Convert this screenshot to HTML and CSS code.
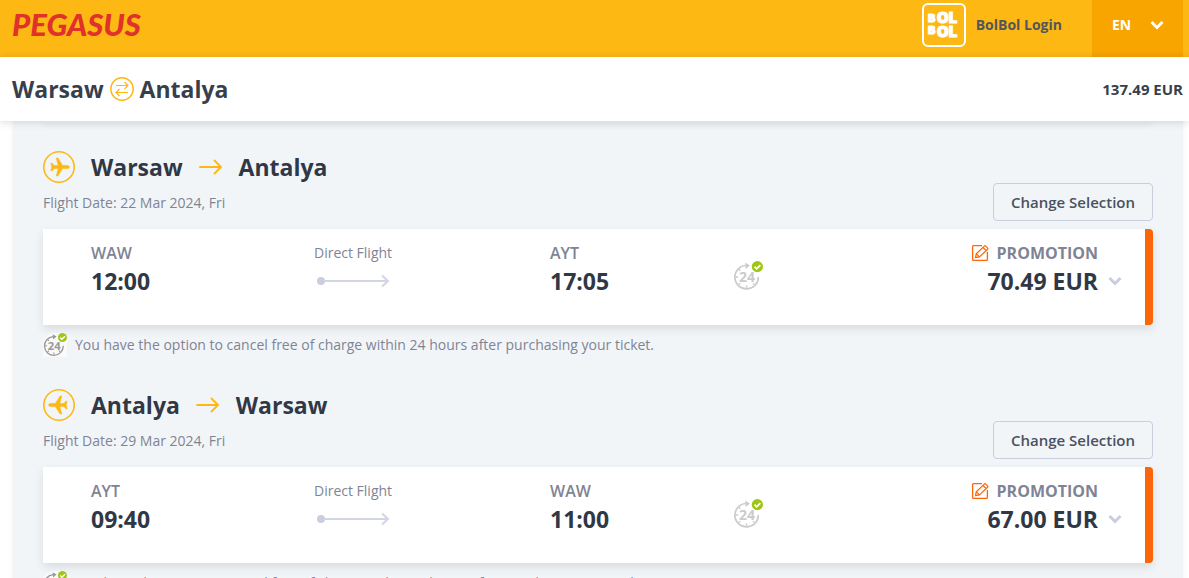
FILE: index.html
```html
<!DOCTYPE html>
<html lang="en">
<head>
  <meta charset="UTF-8">
  <meta name="viewport" content="width=device-width, initial-scale=1">
  <title>Pegasus</title>
  <link rel="stylesheet" href="styles.css">
</head>
<body>
  <!-- shared icons -->
  <svg class="sprite" aria-hidden="true">
    <symbol id="plane" viewBox="0 0 32 32">
      <circle cx="16" cy="16" r="15.200" fill="none" stroke="currentColor" stroke-width="1.600"/>
      <path fill="currentColor" d="M26.500 16c0 .9-1.200 1.600-2.500 1.600h-4.400L15 25h-1.800l2-7.400H11l-1.600 2.200H7.800l1-3.800-1-3.800h1.600L11 14.400h4.200L13.200 7H15l4.600 7.400H24c1.300 0 2.500.7 2.500 1.600z" stroke="currentColor" stroke-width=".5" stroke-linejoin="round"/>
    </symbol>
    <symbol id="arrow" viewBox="0 0 24 16">
      <path d="M1 8h21M15.500 1.500L22 8l-6.500 6.500" fill="none" stroke="currentColor" stroke-width="1.800" stroke-linecap="round" stroke-linejoin="round"/>
    </symbol>
    <symbol id="route" viewBox="0 0 74 14">
      <circle cx="5" cy="7" r="4" fill="#c9cddd"/>
      <path d="M8 7h63M66 1.500l6 5.500-6 5.500" fill="none" stroke="#d2d5e2" stroke-width="2"/>
    </symbol>
    <symbol id="chevron" viewBox="0 0 14 10">
      <path d="M1.500 2L7 7.500 12.500 2" fill="none" stroke="currentColor" stroke-width="3"/>
    </symbol>
    <symbol id="edit" viewBox="0 0 18 18">
      <path d="M11 1.600H2.500a.9.900 0 0 0-.9.900v13a.9.900 0 0 0 .9.900h13a.9.900 0 0 0 .9-.9V8" fill="none" stroke="currentColor" stroke-width="1.300"/>
      <path d="M4.500 13.700l.8-4 8-7.600a1 1 0 0 1 1.400 0l1.800 1.800a1 1 0 0 1 0 1.400l-8 7.600zM5.300 9.700l3.200 3.200M12 3.500l3 3" fill="none" stroke="currentColor" stroke-width="1.200" stroke-linejoin="round"/>
    </symbol>
    <symbol id="free-cancel" viewBox="0 0 32 32">
      <path d="M13.500 4.800A12.500 12.500 0 1 0 27 17" fill="none" stroke="currentColor" stroke-width="1.800"/>
      <path d="M13 1.500l5 3.200-4.500 3.800z" fill="currentColor"/>
      <path d="M3 17h2.500M14.500 28.500V26M6.200 25.200l1.600-1.600M22.800 25.200l-1.600-1.600M6.200 8.800l1.600 1.600" stroke="currentColor" stroke-width="1.500"/>
      <text x="15" y="22" text-anchor="middle" class="icon-24">24</text>
      <circle cx="26" cy="6" r="6" fill="#a1c517"/>
      <path d="M23 6l2.200 2.300 4-4" fill="none" stroke="#fff" stroke-width="1.800"/>
    </symbol>
  </svg>

  <header class="topbar">
    <a class="logo" href="#">PEGASUS</a>
    <div class="topbar-right">
      <a class="login" href="#">
        <svg class="bolbol" viewBox="0 0 44 44" aria-hidden="true">
          <rect x="1" y="1" width="42" height="42" rx="5" fill="none" stroke="#fff" stroke-width="2"/>
          <text x="6" y="19" class="bol-small">B</text>
          <text x="15" y="20" class="bol">OL</text>
          <text x="6" y="31" class="bol-small">B</text>
          <text x="15" y="34" class="bol">OL</text>
        </svg>
        BolBol Login
      </a>
      <button class="language" type="button">EN <svg class="chevron"><use href="#chevron"/></svg></button>
    </div>
  </header>

  <div class="summary">
    <div class="summary-route">
      <span>Warsaw</span>
      <svg class="swap" viewBox="0 0 24 24" aria-hidden="true">
        <circle cx="12" cy="12" r="11.200" fill="none" stroke="currentColor" stroke-width="1.400"/>
        <path d="M6 8.500h12M14.500 5L18 8.500 14.500 12M18 15.500H6M9.500 12L6 15.500 9.500 19" fill="none" stroke="currentColor" stroke-width="1.200"/>
      </svg>
      <span>Antalya</span>
    </div>
    <div class="summary-price">137.49 EUR</div>
  </div>

  <main class="panel">
    <div class="panel-top"></div>

    <section class="flight">
      <h2 class="flight-title">
        <svg class="plane"><use href="#plane"/></svg>
        <span>Warsaw</span>
        <svg class="arrow"><use href="#arrow"/></svg>
        <span>Antalya</span>
      </h2>
      <div class="flight-sub">
        <p class="flight-date">Flight Date: 22 Mar 2024, Fri</p>
        <button class="change" type="button">Change Selection</button>
      </div>
      <div class="card">
        <div class="stop">
          <div class="code">WAW</div>
          <div class="time">12:00</div>
        </div>
        <div class="direct">
          <div>Direct Flight</div>
          <svg class="route"><use href="#route"/></svg>
        </div>
        <div class="stop">
          <div class="code">AYT</div>
          <div class="time">17:05</div>
        </div>
        <svg class="cancel-icon"><use href="#free-cancel"/></svg>
        <div class="fare">
          <div>
            <div class="fare-name"><svg class="edit"><use href="#edit"/></svg>PROMOTION</div>
            <div class="price">70.49 EUR</div>
          </div>
          <svg class="chevron"><use href="#chevron"/></svg>
        </div>
      </div>
      <p class="note">
        <svg class="note-icon"><use href="#free-cancel"/></svg>
        You have the option to cancel free of charge within 24 hours after purchasing your ticket.
      </p>
    </section>

    <section class="flight">
      <h2 class="flight-title">
        <svg class="plane plane-return"><use href="#plane"/></svg>
        <span>Antalya</span>
        <svg class="arrow"><use href="#arrow"/></svg>
        <span>Warsaw</span>
      </h2>
      <div class="flight-sub">
        <p class="flight-date">Flight Date: 29 Mar 2024, Fri</p>
        <button class="change" type="button">Change Selection</button>
      </div>
      <div class="card">
        <div class="stop">
          <div class="code">AYT</div>
          <div class="time">09:40</div>
        </div>
        <div class="direct">
          <div>Direct Flight</div>
          <svg class="route"><use href="#route"/></svg>
        </div>
        <div class="stop">
          <div class="code">WAW</div>
          <div class="time">11:00</div>
        </div>
        <svg class="cancel-icon"><use href="#free-cancel"/></svg>
        <div class="fare">
          <div>
            <div class="fare-name"><svg class="edit"><use href="#edit"/></svg>PROMOTION</div>
            <div class="price">67.00 EUR</div>
          </div>
          <svg class="chevron"><use href="#chevron"/></svg>
        </div>
      </div>
      <p class="note">
        <svg class="note-icon"><use href="#free-cancel"/></svg>
        You have the option to cancel free of charge within 24 hours after purchasing your ticket.
      </p>
    </section>
  </main>
</body>
</html>
```

FILE: styles.css
```css
* {
  box-sizing: border-box;
}
body {
  margin: 0;
  font-family: "Open Sans", "Noto Sans", sans-serif;
  font-size: 14px;
  line-height: 20px;
  color: #7f8495;
  background: #fff;
}
h2, p {
  margin: 0;
}
a {
  text-decoration: none;
}
button {
  font-family: inherit;
  cursor: pointer;
}
svg {
  flex: none;
}
.sprite {
  display: none;
}

/* top bar */
.topbar {
  display: flex;
  justify-content: space-between;
  height: 57px;
  padding: 0 6px 0 12px;
  background: #fdb813;
}
.logo {
  font-family: Lato, sans-serif;
  font-size: 31px;
  font-weight: 900;
  font-style: italic;
  line-height: 48px;
  color: #e0312b;
}
.topbar-right {
  display: flex;
  gap: 30px;
}
.login {
  display: flex;
  align-items: center;
  gap: 10px;
  padding-bottom: 8px;
  font-weight: 700;
  color: #54565b;
}
.bolbol {
  width: 44px;
  height: 44px;
  fill: #fff;
}
.bol,
.bol-small {
  font-family: Inter, sans-serif;
  font-size: 15px;
  font-weight: 900;
  stroke: #fff;
  stroke-width: 1px;
}
.bol-small {
  font-size: 11px;
}
.language {
  display: flex;
  align-items: center;
  justify-content: space-between;
  width: 91px;
  padding: 0 19px 8px 20px;
  border: 0;
  font-size: 14px;
  font-weight: 700;
  color: #fff;
  background: #f8a500;
}
.chevron {
  width: 14px;
  height: 10px;
}

/* trip summary */
.summary {
  position: relative;
  z-index: 1;
  display: flex;
  align-items: center;
  justify-content: space-between;
  height: 64px;
  padding: 0 6px 0 12px;
  color: #373f4d;
  background: #fff;
  box-shadow: 0 1px 8px rgba(0, 0, 0, 0.15);
}
.summary-route {
  display: flex;
  align-items: center;
  gap: 6px;
  font-size: 23px;
  font-weight: 700;
}
.swap {
  width: 24px;
  height: 24px;
  color: #fdb813;
}
.summary-price {
  font-size: 15px;
  font-weight: 700;
}

/* selected flights */
.panel {
  margin: 0 6px 0 13px;
  padding: 0 30px;
  background: #f2f5f8;
  box-shadow: 0 0 6px rgba(0, 0, 0, 0.06);
}
.panel-top {
  height: 1px;
  box-shadow: 0 2px 6px rgba(0, 0, 0, 0.2);
}
.flight {
  padding-top: 29px;
}
.flight + .flight {
  padding-top: 32px;
}
.flight-title {
  display: flex;
  align-items: center;
  gap: 16px;
  height: 32px;
  font-size: 23px;
  font-weight: 700;
  color: #303846;
}
.plane {
  width: 32px;
  height: 32px;
  color: #fdb813;
}
.plane-return {
  transform: rotate(180deg);
}
.arrow {
  width: 24px;
  height: 16px;
  color: #fdb813;
}
.flight-sub {
  display: flex;
  align-items: center;
  justify-content: space-between;
  height: 38px;
  margin-bottom: 8px;
}
.flight-date {
  padding-top: 2px;
}
.change {
  height: 38px;
  width: 160px;
  border: 1px solid #c9cddd;
  border-radius: 4px;
  font-size: 15px;
  font-weight: 600;
  color: #4a5160;
  background: transparent;
}
.card {
  display: grid;
  grid-template-columns: 223fr 236fr 183fr 150fr 239fr;
  height: 96px;
  padding: 14px 23px 0 48px;
  border-right: 8px solid #fc660a;
  border-radius: 0 4px 4px 0;
  background: #fff;
  box-shadow: 0 4px 10px rgba(0, 0, 0, 0.1);
}
.code {
  font-size: 16px;
  font-weight: 600;
}
.time,
.price {
  font-size: 23px;
  font-weight: 700;
  line-height: 36px;
  color: #303846;
}
.direct {
  display: flex;
  flex-direction: column;
  align-items: flex-start;
  gap: 11px;
}
.route {
  width: 74px;
  height: 14px;
  margin-left: 2px;
}
.cancel-icon {
  width: 30px;
  height: 30px;
  margin-top: 18px;
  color: #cbcbcb;
}
.icon-24 {
  font-size: 15px;
  font-weight: 700;
  fill: currentColor;
}
.fare {
  display: flex;
  align-items: flex-start;
  justify-content: flex-end;
  gap: 10px;
  text-align: right;
}
.fare .chevron {
  margin-top: 33px;
  color: #c9cddd;
}
.fare-name {
  display: flex;
  align-items: center;
  justify-content: flex-end;
  gap: 8px;
  font-size: 16px;
  font-weight: 700;
}
.edit {
  width: 18px;
  height: 18px;
  color: #fc660a;
}
.note {
  display: flex;
  align-items: center;
  gap: 8px;
  height: 24px;
  margin-top: 8px;
}
.note-icon {
  width: 24px;
  height: 24px;
  border-radius: 12px 4px 0 0;
  color: #999;
  background: #fafafa;
}
```
